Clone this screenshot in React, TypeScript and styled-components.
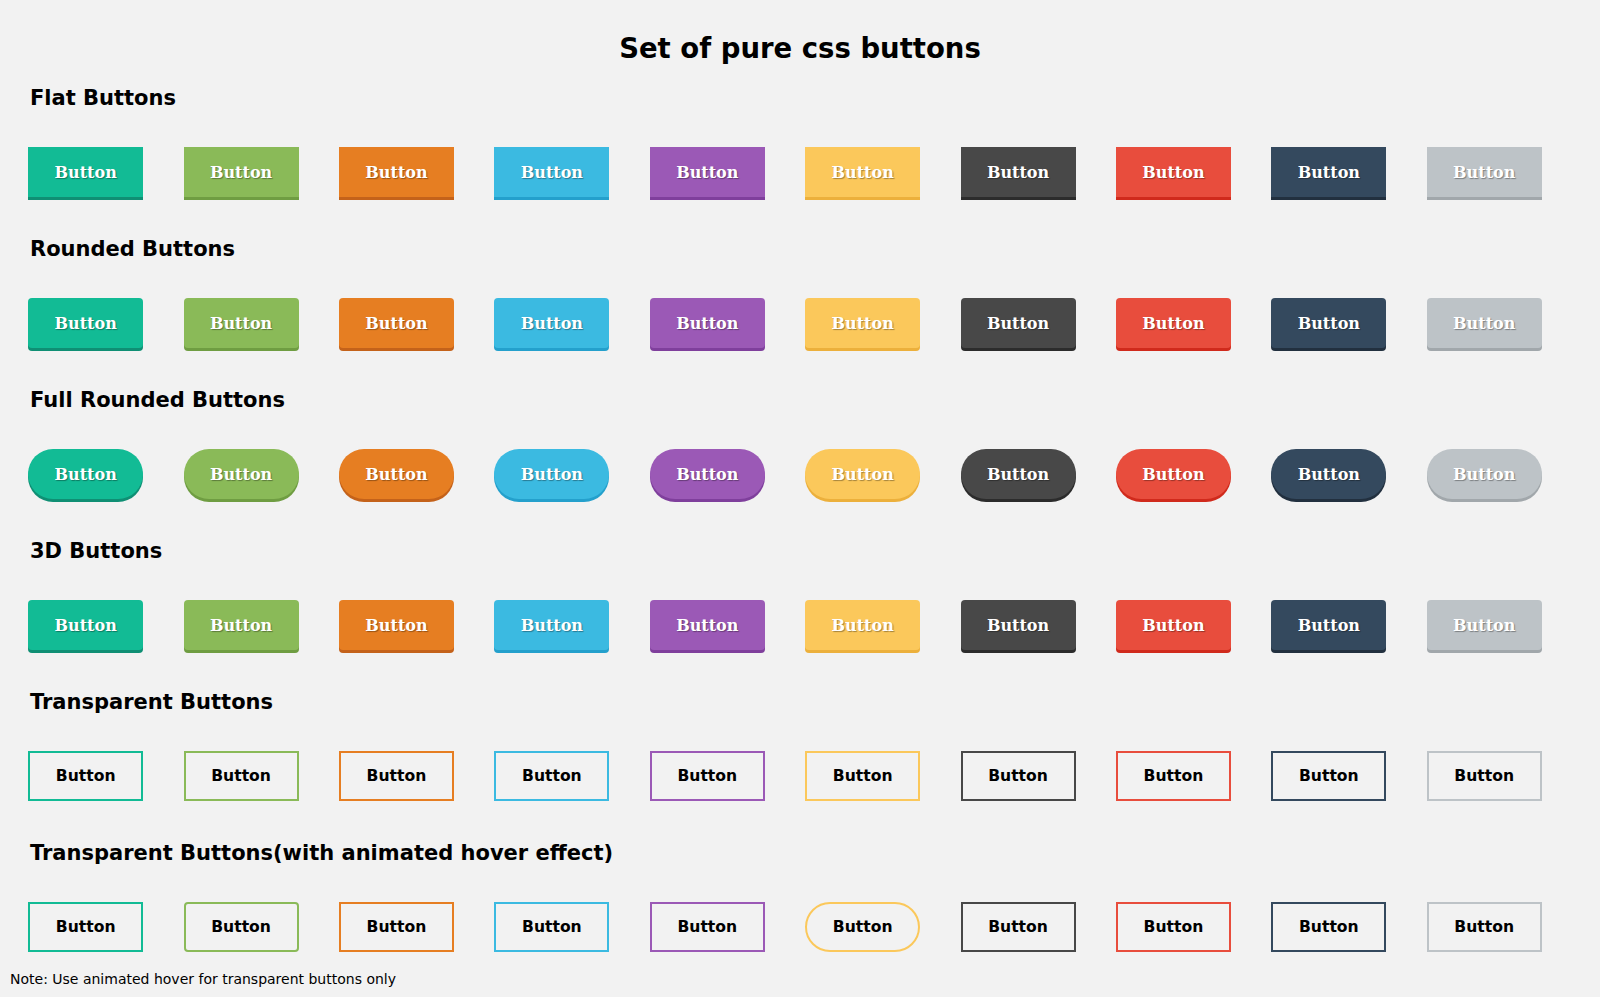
import React from "react";
import styled, { createGlobalStyle } from "styled-components";

const GlobalStyle = createGlobalStyle`
  html, body {
    margin: 0;
    padding: 0;
    background: #f2f2f2;
  }
  body {
    font-family: "DejaVu Sans", Verdana, sans-serif;
    color: #000;
  }
`;

type Palette = { base: string; dark: string };

const COLORS: Palette[] = [
  { base: "#12bb95", dark: "#0f8f74" },
  { base: "#8aba58", dark: "#6f9d42" },
  { base: "#e67e22", dark: "#c4621a" },
  { base: "#3bbae1", dark: "#24a0cc" },
  { base: "#9b59b6", dark: "#7f3f9c" },
  { base: "#fbc85b", dark: "#ecb03c" },
  { base: "#484848", dark: "#2c2c2c" },
  { base: "#e84d3d", dark: "#d02a1c" },
  { base: "#34495e", dark: "#22303f" },
  { base: "#bdc3c7", dark: "#a1a7ab" },
];

type Shape = "flat" | "rounded" | "pill";

const Page = styled.main`
  padding: 32px 8px 0;
  display: flex;
  flex-direction: column;
`;

const Title = styled.h1`
  margin: 0 0 22px;
  font-size: 27.5px;
  line-height: 32px;
  font-weight: bold;
  text-align: center;
`;

const Sections = styled.div`
  display: flex;
  flex-direction: column;
  gap: 37px;
`;

const Section = styled.section`
  display: flex;
  flex-direction: column;
  gap: 37px;
`;

const Heading = styled.h2`
  margin: 0;
  padding-left: 22px;
  font-size: 21px;
  line-height: 24px;
  font-weight: bold;
`;

const Row = styled.div`
  display: grid;
  grid-template-columns: repeat(10, 155.4px);
  justify-items: center;
  align-items: start;
  height: 53px;
`;

const radius = (shape: Shape) =>
  shape === "pill" ? "25px" : shape === "rounded" ? "4px" : "0";

const SolidButton = styled.button<{ $c: Palette; $shape: Shape }>`
  width: 115px;
  height: 50px;
  margin: 0;
  padding: 0;
  border: none;
  background: ${(p) => p.$c.base};
  box-shadow: 0 3px 0 ${(p) => p.$c.dark};
  border-radius: ${(p) => radius(p.$shape)};
  color: #fff;
  font-family: "DejaVu Serif", Georgia, serif;
  font-weight: bold;
  font-size: 16px;
  text-shadow: 1px 1px 1px rgba(0, 0, 0, 0.35);
  cursor: pointer;
`;

const OutlineButton = styled.button<{ $c: Palette; $shape: Shape }>`
  box-sizing: border-box;
  width: 115px;
  height: 50px;
  margin: 0;
  padding: 0;
  background: transparent;
  border: 2px solid ${(p) => p.$c.base};
  border-radius: ${(p) => radius(p.$shape)};
  color: #000;
  font-family: "DejaVu Sans", Verdana, sans-serif;
  font-weight: bold;
  font-size: 15.6px;
  cursor: pointer;
`;

const Note = styled.p`
  margin: 16px 0 0;
  padding-left: 2px;
  font-size: 14px;
  line-height: 17px;
`;

const solidSections: { title: string; shape: Shape }[] = [
  { title: "Flat Buttons", shape: "flat" },
  { title: "Rounded Buttons", shape: "rounded" },
  { title: "Full Rounded Buttons", shape: "pill" },
  { title: "3D Buttons", shape: "rounded" },
];

const animatedShapes: Shape[] = [
  "flat",
  "rounded",
  "flat",
  "flat",
  "flat",
  "pill",
  "flat",
  "flat",
  "flat",
  "flat",
];

export default function App() {
  return (
    <>
      <GlobalStyle />
      <Page>
        <Title>Set of pure css buttons</Title>
        <Sections>
          {solidSections.map((s) => (
            <Section key={s.title}>
              <Heading>{s.title}</Heading>
              <Row>
                {COLORS.map((c, i) => (
                  <SolidButton key={i} $c={c} $shape={s.shape}>
                    Button
                  </SolidButton>
                ))}
              </Row>
            </Section>
          ))}
          <Section>
            <Heading>Transparent Buttons</Heading>
            <Row>
              {COLORS.map((c, i) => (
                <OutlineButton key={i} $c={c} $shape="flat">
                  Button
                </OutlineButton>
              ))}
            </Row>
          </Section>
          <Section>
            <Heading>Transparent Buttons(with animated hover effect)</Heading>
            <Row>
              {COLORS.map((c, i) => (
                <OutlineButton key={i} $c={c} $shape={animatedShapes[i]}>
                  Button
                </OutlineButton>
              ))}
            </Row>
          </Section>
        </Sections>
        <Note>Note: Use animated hover for transparent buttons only</Note>
      </Page>
    </>
  );
}
